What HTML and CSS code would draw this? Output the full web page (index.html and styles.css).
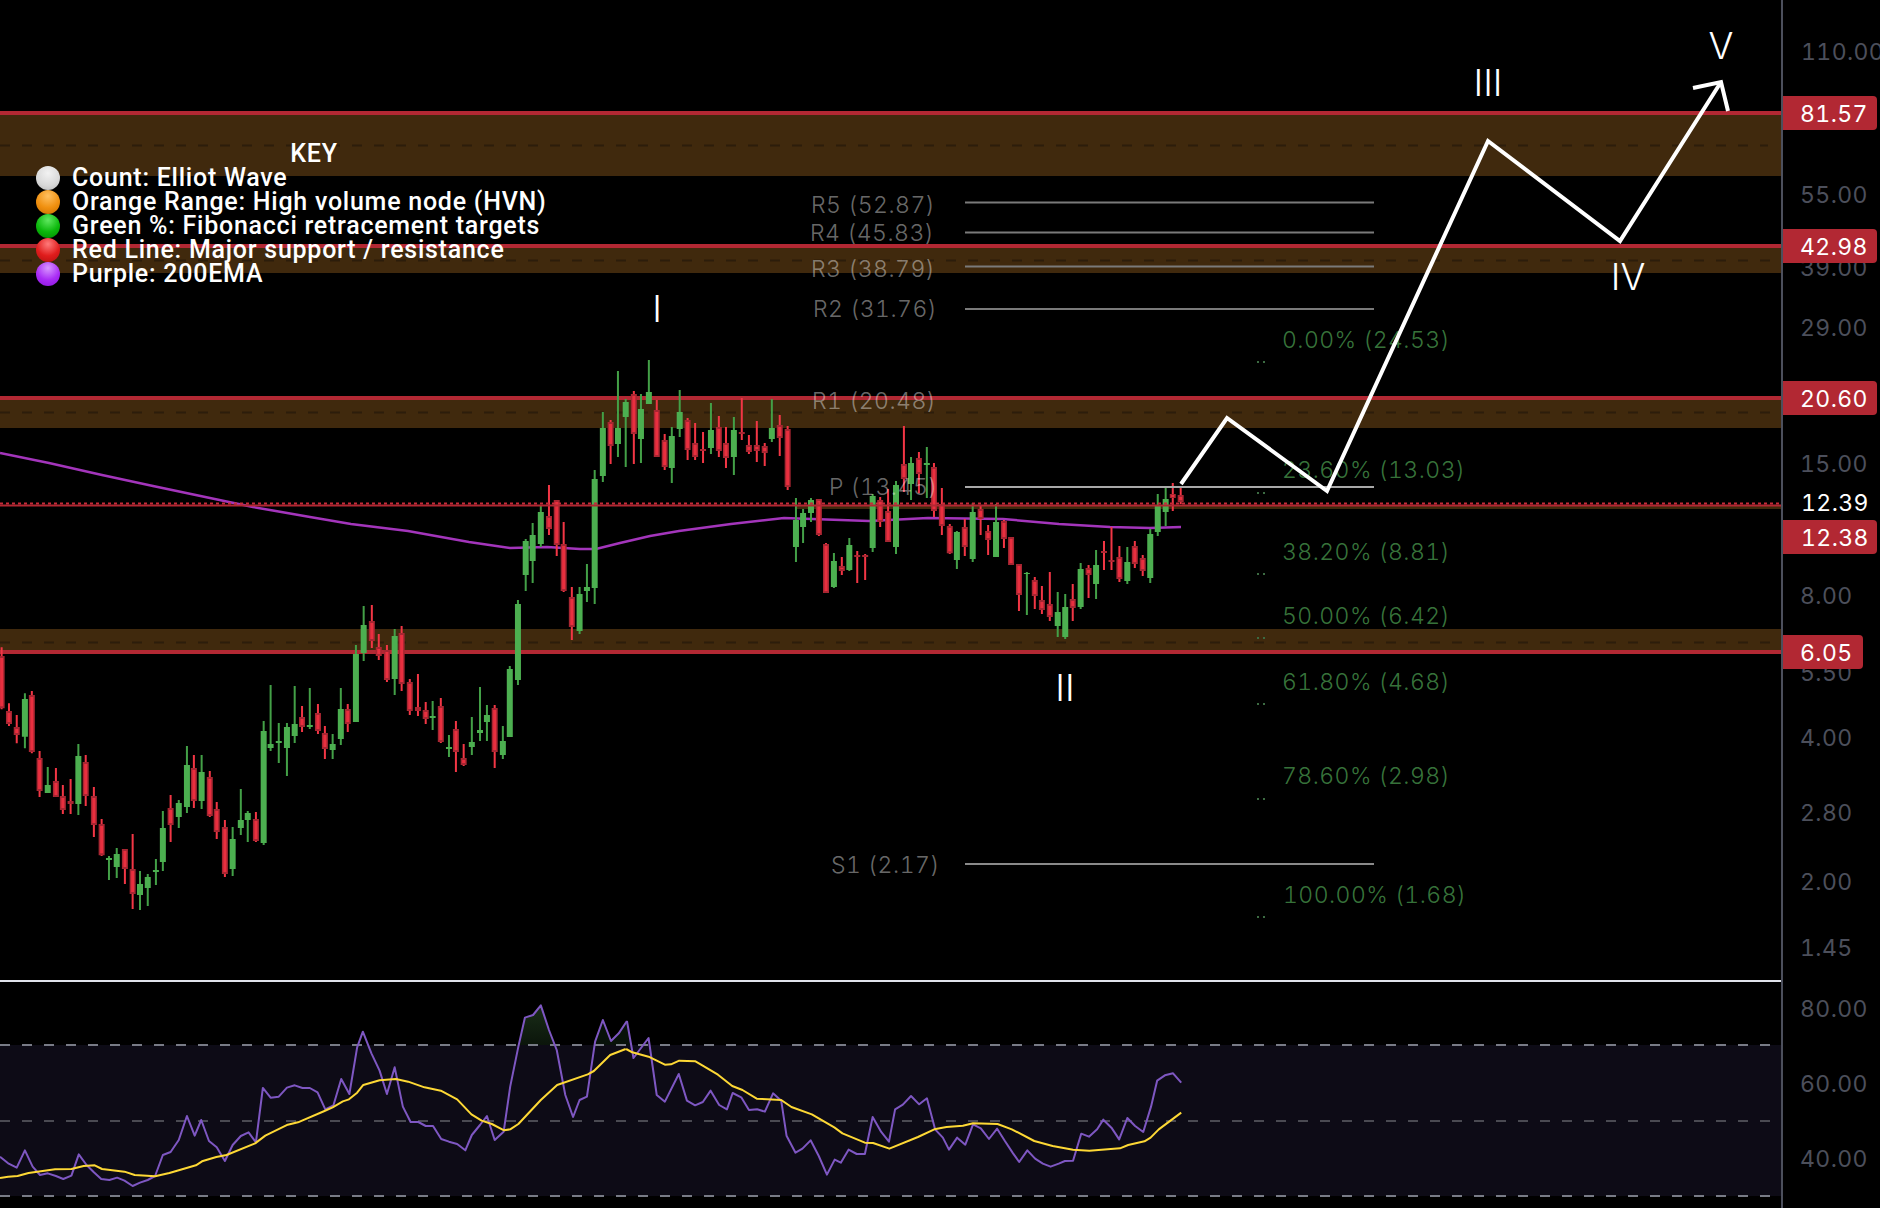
FILE: index.html
```html
<!DOCTYPE html>
<html lang="en">
<head>
<meta charset="utf-8">
<title>Elliott Wave chart</title>
<link rel="stylesheet" href="styles.css">
</head>
<body>
<div class="app">
  <div class="panes">
    <div class="main-pane">
      <svg class="chart" viewBox="0 0 1781 980" width="1781" height="980" aria-label="Price chart">
        <rect class="band" x="0" y="115" width="1781" height="61"/>
        <rect class="band" x="0" y="248" width="1781" height="25"/>
        <rect class="band" x="0" y="400" width="1781" height="28"/>
        <rect class="band" x="0" y="629" width="1781" height="21"/>
        <rect class="band" x="796" y="505" width="985" height="4"/>
        <path class="band-dash" d="M0 145.500H1768M0 260.500H1781M0 412.500H1781M0 642.500H1781"/>
        <path class="level" d="M0 113H1781M0 246H1781M0 398H1781M0 652H1781"/>

        <path class="ema" d="M0 453L49 463L102 475L153 486L229 502L253 507L310 517L351 524L408 531L469 542L510 548L547 547L580 549L596 549L620 543L650 536L679 531L731 524L784 518L869 521L928 518L1003 519L1059 524L1110 527L1150 528L1181 527"/>

        <g transform="translate(0 620) scale(.40816 .33333)">
          <path class="wick-up" d="M61 220V385M117 441V519M192 372V585M267 708V780M286 684V774M343 753V870M362 762V858M382 717V795M399 573V753M438 540V624M458 378V579M494 405V567M570 621V768M590 507V645M607 573V666M646 303V675M663 195V393M683 309V429M703 309V468M722 198V369M759 204V327M815 342V417M835 204V375M872 75V306M891 -42V123M967 27V225M1060 243V330M1100 345V411M1156 291V405M1176 201V363M1193 255V363M1232 318V417M1249 138V351M1269 -60V195"/>
          <path class="body-up" d="M61 237V350M117 495V519M192 408V552M267 714V720M286 702V741M343 792V825M362 771V804M382 750V756M399 624V726M438 549V591M458 435V561M494 456V543M570 657V747M590 600V624M607 579V600M646 333V669M663 372V384M683 363V369M703 321V384M722 312V348M759 315V321M815 372V390M835 267V357M872 102V306M891 15V99M967 48V177M1060 288V294M1100 381V387M1156 366V381M1176 330V339M1193 285V306M1232 363V405M1249 147V351M1269 -48V180"/>
          <path class="wick-down" d="M4 82V268M22 250V318M41 285V370M78 213V400M97 393V531M137 444V531M154 495V582M173 477V582M210 405V558M230 501V651M249 597V708M306 687V792M325 642V867M418 525V666M475 405V564M514 453V591M531 546V657M551 600V771M627 576V666M740 258V336M779 252V342M796 318V417M852 252V336M911 -45V84M928 42V120M948 75V186M984 18V213M1004 177V285M1024 162V288M1043 246V312M1080 234V369M1117 303V456M1136 372V438M1212 255V444"/>
          <path class="body-down-edge" d="M4 108V265M22 273V312M41 321V345M78 225V396M97 414V513M137 483V531M154 528V570M173 543V552M210 426V528M230 528V615M249 612V706M306 687V747M325 747V822M418 564V615M475 444V543M514 471V588M531 567V636M551 621V762M627 597V663M740 291V321M779 279V333M796 339V387M852 267V312M911 3V63M928 81V108M948 90V180M984 39V192M1004 186V273M1024 261V273M1043 270V297M1080 258V366M1117 327V396M1136 414V435M1212 264V396"/>
          <path class="body-down" d="M4 114V259M22 279V306M41 327V339M78 231V390M97 420V507M137 489V525M154 534V564M210 432V522M230 534V609M249 618V700M306 693V741M325 753V816M418 570V609M475 450V537M514 477V582M531 573V630M551 627V756M627 603V657M740 297V315M779 285V327M796 345V381M852 273V306M911 9V57M928 87V102M948 96V174M984 45V186M1004 192V267M1043 276V291M1080 264V360M1117 333V390M1136 420V429M1212 270V390"/>
        </g>
        <g transform="translate(0 350) scale(.40816 .33333)">
          <path class="wick-up" d="M1288 567V723M1305 519V699M1325 468V591M1420 711V852M1438 642V756M1457 360V762M1477 186V396M1514 63V321M1533 147V351"/>
          <path class="body-up" d="M1288 573V675M1305 555V633M1325 486V582M1420 732V843M1438 711V723M1457 387V714M1477 234V378M1514 234V282M1533 156V201"/>
          <path class="wick-down" d="M1345 405V555M1364 450V618M1381 516V726M1401 711V870M1496 210V342"/>
          <path class="body-down-edge" d="M1345 498V537M1364 450V585M1381 582V723M1401 741V831M1496 216V288"/>
          <path class="body-down" d="M1345 504V531M1364 456V579M1381 588V717M1401 747V825M1496 222V282"/>
        </g>
        <g transform="translate(620 380) scale(.39541 .33333)">
          <path class="wick-up" d="M53 42V249M73 -60V72M131 141V309M151 30V171M230 69V222M288 111V285M384 57V186M445 354V546M463 387V489M483 354V426M541 519V624M580 474V573M639 342V516M698 303V522M736 231V360M776 201V354M852 453V567M892 369V546M951 372V531M1029 576V705M1107 636V771M1126 642V777M1165 549V687M1204 510V657M1283 501V612M1341 447V609M1360 342V468M1380 318V438"/>
          <path class="body-up" d="M53 87V177M73 36V72M131 168V264M151 96V147M230 150V204M288 150V231M384 144V177M445 420V501M463 399V441M483 360V399M541 543V621M580 495V570M639 348V504M698 315V501M736 249V312M776 249V255M852 456V540M892 396V537M951 426V531M1029 579V582M1107 696V738M1126 681V771M1165 567V681M1204 555V612M1283 546V603M1341 462V594M1360 378V456M1380 357V396"/>
          <path class="wick-down" d="M35 33V252M93 60V231M113 162V270M171 114V240M190 129V240M210 156V249M250 108V231M268 141V264M308 54V180M326 165V222M346 123V246M366 189V258M404 105V228M424 138V330M503 357V468M521 489V639M561 531V585M600 513V609M620 522V600M658 351V441M678 327V486M718 138V336M756 216V340M794 249V411M814 324V465M834 432V522M872 417V528M912 378V465M931 435V525M971 420V504M989 471V555M1009 552V693M1049 591V687M1067 618V702M1087 576V723M1145 612V723M1185 555V654M1224 483V570M1243 441V570M1263 498V606M1302 483V564M1322 525V588M1398 309V393M1418 324V372"/>
          <path class="body-down-edge" d="M35 42V162M93 90V231M113 180V261M171 120V210M190 189V231M210 207V213M250 141V213M268 189V234M308 156V162M326 195V216M346 195V213M366 198V219M404 135V174M424 147V321M503 357V465M521 492V639M561 558V573M600 525V531M620 525V531M658 360V426M678 393V486M718 252V297M756 234V282M794 261V393M814 372V438M834 438V520M872 441V501M912 387V417M931 453V480M971 423V477M989 471V555M1009 552V645M1049 600V648M1067 660V690M1087 672V711M1145 657V684M1185 564V585M1224 513V519M1243 540V546M1263 531V597M1302 498V552M1322 534V573M1398 342V354M1418 345V366"/>
          <path class="body-down" d="M35 48V156M93 96V225M113 186V255M171 126V204M190 195V225M250 147V207M268 195V228M326 201V210M346 201V207M366 204V213M404 141V168M424 153V315M503 363V459M521 498V633M561 564V567M658 366V420M678 399V480M718 258V291M756 240V276M794 267V387M814 378V432M834 444V514M872 447V495M912 393V411M931 459V474M971 429V471M989 477V549M1009 558V639M1049 606V642M1067 666V684M1087 678V705M1145 663V678M1185 570V579M1263 537V591M1302 504V546M1322 540V567M1398 345V351M1418 351V360"/>
        </g>

        <path class="price-dots" d="M0 503.500H1781"/>
        <path class="price-line" d="M0 505.500H1781"/>

        <path class="pivot" d="M965 202.500H1374M965 232.500H1374M965 266.500H1374M965 309H1374"/>
        <path class="pivot-bright" d="M965 487H1374"/>
        <path class="pivot-mid" d="M965 864H1374"/>

        <g class="pivot-text">
          <text x="811" y="213">R5 (52.87)</text>
          <text x="810" y="241">R4 (45.83)</text>
          <text x="811" y="277">R3 (38.79)</text>
          <text x="813" y="317">R2 (31.76)</text>
          <text x="812" y="409">R1 (20.48)</text>
          <text x="829" y="495">P (13.45)</text>
          <text x="831" y="873">S1 (2.17)</text>
        </g>
        <g class="fib-text">
          <text x="1282" y="348">0.00% (24.53)</text>
          <text x="1282" y="478">23.60% (13.03)</text>
          <text x="1282" y="560">38.20% (8.81)</text>
          <text x="1282" y="624">50.00% (6.42)</text>
          <text x="1282" y="690">61.80% (4.68)</text>
          <text x="1282" y="784">78.60% (2.98)</text>
          <text x="1283" y="903">100.00% (1.68)</text>
        </g>
        <path class="fib-dots" d="M1257 362h2M1263 362h2M1257 493h2M1263 493h2M1257 574h2M1263 574h2M1257 638h2M1263 638h2M1257 704h2M1263 704h2M1257 799h2M1263 799h2M1257 917h2M1263 917h2"/>

        <path class="wave" d="M1181 484L1227 418L1327 491L1488 141L1620 241L1721 82"/>
        <path class="wave" d="M1693 88L1721 82L1728 111"/>
        <g class="wave-text">
          <text x="657" y="322">I</text>
          <text x="1065" y="701">II</text>
          <text x="1488" y="96">III</text>
          <text x="1628" y="290">IV</text>
          <text x="1721" y="59">V</text>
        </g>
      </svg>

      <div class="legend">
        <div class="legend-title">KEY</div>
        <div class="legend-row"><span class="ball ball-white"></span>Count: Elliot Wave</div>
        <div class="legend-row"><span class="ball ball-orange"></span>Orange Range: High volume node (HVN)</div>
        <div class="legend-row"><span class="ball ball-green"></span>Green %: Fibonacci retracement targets</div>
        <div class="legend-row"><span class="ball ball-red"></span>Red Line: Major support / resistance</div>
        <div class="legend-row"><span class="ball ball-purple"></span>Purple: 200EMA</div>
      </div>
    </div>

    <div class="divider"></div>

    <div class="rsi-pane">
      <svg class="chart" viewBox="0 982 1781 226" width="1781" height="226" aria-label="RSI">
        <defs>
          <linearGradient id="ob" x1="0" y1="0" x2="0" y2="1">
            <stop offset="0" stop-color="#1a2e18"/>
            <stop offset="1" stop-color="#0b150b"/>
          </linearGradient>
        </defs>
        <rect class="rsi-bg" x="0" y="1045" width="1781" height="151"/>
        <g transform="translate(0 970) scale(.40816 .33333)">
          <path class="ob-a" d="M1270 225L1286 143L1306 135L1325 106L1345 180L1358 225Z"/>
          <path class="ob-b" d="M1455 225L1458 215L1477 150L1497 213L1516 190L1536 153L1545 225Z"/>
        </g>
        <path class="rsi-dash" d="M0 1045H1781M0 1196H1781"/>
        <path class="rsi-dash-mid" d="M0 1121H1781"/>
        <g transform="translate(0 970) scale(.40816 .33333)">
          <path class="rsi-line" d="M0 560L20 580L41 593L61 541L80 590L98 615L117 610L137 618L155 627L175 617L193 553L212 585L230 607L248 627L268 630L287 623L305 632L325 648L343 638L362 630L380 618L399 555L418 546L438 510L458 438L477 497L493 450L512 513L531 532L551 573L570 525L590 498L609 487L627 517L644 354L663 383L683 380L703 353L722 346L741 354L759 354L778 367L797 418L817 406L836 327L856 372L875 232L889 185L910 250L930 302L948 372L967 292L987 410L1006 456L1025 456L1043 468L1061 468L1081 507L1100 515L1120 522L1140 541L1156 495L1176 465L1193 438L1212 510L1234 485L1250 350L1270 230L1286 143L1306 135L1325 106L1345 180L1364 240L1385 375L1404 441L1420 390L1438 380L1458 215L1477 150L1497 213L1516 190L1536 153"/>
          <path class="rsi-ma" d="M0 624L20 620L43 618L70 609L100 604L135 598L175 597L205 588L232 586L250 597L305 605L330 615L380 619L415 609L480 586L495 574L530 561L555 555L625 520L650 497L705 464L730 457L795 423L815 412L840 394L855 388L875 368L890 345L930 331L970 327L1000 335L1040 352L1080 362L1120 388L1155 433L1180 452L1205 462L1235 481L1250 478L1270 462L1325 390L1365 345L1440 313L1455 303L1495 255L1533 237"/>
        </g>
        <g transform="translate(620 970) scale(.40816 .33333)">
          <path class="rsi-line" d="M17 153L33 264L70 204L90 375L110 395L144 312L164 392L184 406L203 396L222 362L243 405L262 418L276 369L297 382L316 420L336 418L355 425L375 370L395 392L408 497L430 548L447 536L467 511L487 558L507 614L526 569L541 578L560 539L580 552L600 552L619 441L640 486L659 515L674 418L693 404L713 378L733 403L752 385L772 478L791 503L806 539L826 503L846 524L865 463L884 475L904 507L924 476L943 513L963 550L978 576L998 541L1017 566L1036 581L1055 590L1075 581L1090 573L1110 572L1130 491L1149 500L1169 478L1184 449L1204 473L1223 508L1243 444L1262 468L1282 486L1301 410L1316 332L1335 316L1355 310L1375 338"/>
          <path class="rsi-ma" d="M15 237L30 247L70 260L110 284L125 283L145 272L185 274L240 314L275 348L300 360L335 386L395 390L420 411L470 433L525 472L545 490L600 518L620 519L660 536L730 501L770 478L800 471L840 467L865 460L925 462L960 478L1015 513L1060 528L1110 539L1150 542L1225 535L1245 525L1285 514L1300 503L1320 478L1375 428"/>
        </g>
      </svg>
    </div>
  </div>

  <div class="axis">
    <svg class="chart" viewBox="1783 0 97 1208" width="97" height="1208" aria-label="Price scale">
      <g class="axis-text">
        <text x="1801" y="60">110.00</text>
        <text x="1800" y="203">55.00</text>
        <text x="1800" y="276">39.00</text>
        <text x="1800" y="336">29.00</text>
        <text x="1800" y="472">15.00</text>
        <text x="1800" y="604">8.00</text>
        <text x="1800" y="681">5.50</text>
        <text x="1800" y="746">4.00</text>
        <text x="1800" y="821">2.80</text>
        <text x="1800" y="890">2.00</text>
        <text x="1800" y="956">1.45</text>
        <text x="1800" y="1017">80.00</text>
        <text x="1800" y="1092">60.00</text>
        <text x="1800" y="1167">40.00</text>
      </g>
      <text class="axis-now" x="1801" y="511">12.39</text>
      <path class="tag" d="M1783 96H1873a4 4 0 0 1 4 4V126a4 4 0 0 1-4 4H1783Z"/>
      <path class="tag" d="M1783 229H1873a4 4 0 0 1 4 4V259a4 4 0 0 1-4 4H1783Z"/>
      <path class="tag" d="M1783 381H1873a4 4 0 0 1 4 4V411a4 4 0 0 1-4 4H1783Z"/>
      <path class="tag" d="M1783 520H1873a4 4 0 0 1 4 4V550a4 4 0 0 1-4 4H1783Z"/>
      <path class="tag" d="M1783 635H1859a4 4 0 0 1 4 4V665a4 4 0 0 1-4 4H1783Z"/>
      <g class="tag-text">
        <text x="1800" y="122">81.57</text>
        <text x="1800" y="255">42.98</text>
        <text x="1800" y="407">20.60</text>
        <text x="1801" y="546">12.38</text>
        <text x="1800" y="661">6.05</text>
      </g>
    </svg>
  </div>
</div>
</body>
</html>
```

FILE: styles.css
```css
html, body {
  margin: 0;
  padding: 0;
  background: #000;
}

.app {
  display: flex;
  width: 1880px;
  height: 1208px;
  overflow: hidden;
  background: #000;
  font-family: Inter, "Liberation Sans", sans-serif;
  font-variant-numeric: tabular-nums;
}

.panes {
  display: flex;
  flex-direction: column;
  width: 1781px;
}

.main-pane {
  position: relative;
  height: 980px;
}

.divider {
  height: 2px;
  background: #e0e3eb;
}

.rsi-pane {
  flex: 1;
}

.axis {
  width: 97px;
  border-left: 2px solid #4c4f5c;
}

.chart {
  display: block;
}

.chart path {
  vector-effect: non-scaling-stroke;
  fill: none;
}

.band { fill: #40290d; }

.chart .band-dash {
  stroke: #2c1d0b;
  stroke-width: 2;
  stroke-dasharray: 10 12;
}

.chart .level {
  stroke: #b22833;
  stroke-width: 4;
}

.chart .ema {
  stroke: #a335bb;
  stroke-width: 2.5;
}

.chart .wick-up { stroke: #43a047; stroke-width: 2; }
.chart .wick-down { stroke: #f23645; stroke-width: 2; }
.chart .body-up { stroke: #4caf50; stroke-width: 6; }
.chart .body-down-edge { stroke: #a82632; stroke-width: 6; }
.chart .body-down { stroke: #e92f3f; stroke-width: 3; }

.chart .price-dots {
  stroke: #c62b39;
  stroke-width: 2;
  stroke-dasharray: 3 3;
}

.chart .price-line {
  stroke: #b22833;
  stroke-width: 2;
}

.chart .pivot { stroke: #7a7a7a; stroke-width: 2; }
.chart .pivot-bright { stroke: #a8a8a8; stroke-width: 2; }
.chart .pivot-mid { stroke: #8a8a8a; stroke-width: 2; }

.pivot-text text {
  fill: #fff;
  fill-opacity: 0.42;
  font-size: 23px;
  font-weight: 300;
  letter-spacing: 0.5px;
}

.fib-text text {
  fill: #5cbf60;
  fill-opacity: 0.62;
  font-size: 23px;
  font-weight: 300;
  letter-spacing: 0.45px;
}

.chart .fib-dots {
  stroke: #3c6b42;
  stroke-width: 2;
}

.chart .wave {
  stroke: #fff;
  stroke-width: 4;
  stroke-linejoin: miter;
}

.wave-text text {
  fill: #fff;
  font-size: 37px;
  font-weight: 300;
  text-anchor: middle;
}

.legend {
  position: absolute;
  left: 36px;
  top: 142px;
  display: flex;
  flex-direction: column;
  color: #fff;
  font-family: Roboto, "Liberation Sans", sans-serif;
  font-size: 25px;
  font-weight: 500;
  letter-spacing: 0.75px;
}

.legend-title {
  height: 24px;
  line-height: 24px;
  width: 556px;
  text-align: center;
}

.legend-row {
  display: flex;
  align-items: center;
  gap: 12px;
  height: 24px;
  line-height: 24px;
  white-space: nowrap;
}

.ball {
  width: 24px;
  height: 24px;
  border-radius: 50%;
  flex: none;
}

.ball-white { background: radial-gradient(circle at 50% 30%, #f2f2f2, #d8d8d8 60%, #b8b8b8 100%); }
.ball-orange { background: radial-gradient(circle at 50% 25%, #ffc060, #f0900f 55%, #c96f00 100%); }
.ball-green { background: radial-gradient(circle at 50% 25%, #60e860, #0cb80c 55%, #008a00 100%); }
.ball-red { background: radial-gradient(circle at 50% 25%, #ff7a7a, #e01c1c 55%, #b01010 100%); }
.ball-purple { background: radial-gradient(circle at 50% 25%, #d896ff, #a92cf5 55%, #8a14dc 100%); }

.rsi-bg { fill: #0d0b16; }
.chart .ob-a { fill: url(#ob); }
.chart .ob-b { fill: #08120a; }

.chart .rsi-dash {
  stroke: #787b86;
  stroke-width: 2;
  stroke-dasharray: 10 12;
}

.chart .rsi-dash-mid {
  stroke: #4a4a52;
  stroke-width: 2;
  stroke-dasharray: 10 12;
}

.chart .rsi-line {
  stroke: #7e57c2;
  stroke-width: 2;
  stroke-linejoin: round;
}

.chart .rsi-ma {
  stroke: #fdd835;
  stroke-width: 2;
  stroke-linejoin: round;
}

.axis-text text {
  fill: #4c4f5b;
  font-size: 23px;
  font-weight: 400;
  letter-spacing: 0.4px;
}

.axis-now {
  fill: #fff;
  font-size: 23px;
  letter-spacing: 0.4px;
}

.chart .tag { fill: #b22833; }

.tag-text text {
  fill: #fff;
  font-size: 23px;
  letter-spacing: 0.4px;
}
```
